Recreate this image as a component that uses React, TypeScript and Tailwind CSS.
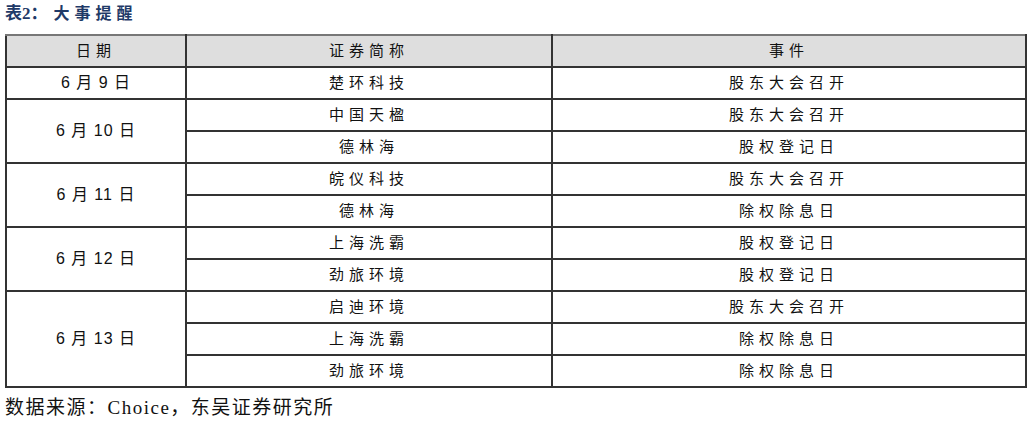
const groups = [
  { date: "6 月 9 日", items: [["楚环科技", "股东大会召开"]] },
  {
    date: "6 月 10 日",
    items: [
      ["中国天楹", "股东大会召开"],
      ["德林海", "股权登记日"],
    ],
  },
  {
    date: "6 月 11 日",
    items: [
      ["皖仪科技", "股东大会召开"],
      ["德林海", "除权除息日"],
    ],
  },
  {
    date: "6 月 12 日",
    items: [
      ["上海洗霸", "股权登记日"],
      ["劲旅环境", "股权登记日"],
    ],
  },
  {
    date: "6 月 13 日",
    items: [
      ["启迪环境", "股东大会召开"],
      ["上海洗霸", "除权除息日"],
      ["劲旅环境", "除权除息日"],
    ],
  },
];

const cjk = "font-['Liberation_Sans','Noto_Sans_CJK_SC',sans-serif]";

export default function App() {
  return (
    <div className="w-[1031px] h-[424px] bg-white px-[5px] text-[#111]">
      <div className="h-[34px] pt-[3px] font-['Liberation_Serif','Noto_Sans_CJK_SC',serif] text-[16px] font-bold leading-[22px] text-[#1f3a68]">
        <span className="text-[17px] pr-[6px]">表2：</span>
        <span className="tracking-[5px]">大事提醒</span>
      </div>
      <table className={`w-[1020px] border-collapse table-fixed ${cjk} text-[15px]`}>
        <colgroup>
          <col className="w-[180px]" />
          <col className="w-[366px]" />
          <col className="w-[474px]" />
        </colgroup>
        <thead>
          <tr className="h-[32px] bg-[#dedede]">
            <th className="border-2 border-[#333] border-t-[#777] font-normal tracking-[5px] text-center">日期</th>
            <th className="border-2 border-[#333] border-t-[#777] font-normal tracking-[5px] text-center">证券简称</th>
            <th className="border-2 border-[#333] border-t-[#777] font-normal tracking-[5px] text-center">事件</th>
          </tr>
        </thead>
        <tbody>
          {groups.map((g) =>
            g.items.map(([name, event], i) => (
              <tr key={g.date + name + i} className="h-[32px]">
                {i === 0 && (
                  <td
                    rowSpan={g.items.length}
                    className="border-2 border-[#333] text-center tracking-[1px] text-[16px]"
                  >
                    {g.date}
                  </td>
                )}
                <td className="border-2 border-[#333] border-t-[#555] text-center tracking-[5px]">{name}</td>
                <td className="border-2 border-[#333] border-t-[#555] text-center tracking-[5px]">{event}</td>
              </tr>
            ))
          )}
        </tbody>
      </table>
      <div className="pt-[9px] font-['Liberation_Serif','Noto_Sans_CJK_SC',serif] text-[19px] leading-[22px] tracking-[1.5px]">
        数据来源：Choice，东吴证券研究所
      </div>
    </div>
  );
}
